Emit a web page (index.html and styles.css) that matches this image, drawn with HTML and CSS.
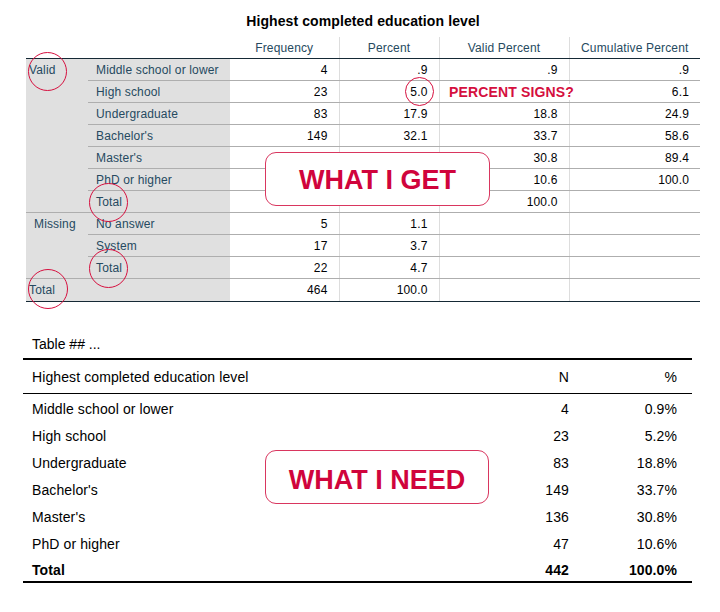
FILE: index.html
```html
<!DOCTYPE html>
<html lang="en">
<head>
<meta charset="utf-8">
<title>Frequencies: what I get vs what I need</title>
<link rel="stylesheet" href="styles.css">
</head>
<body>
<div class="page">
  <section class="spss">
    <div class="spss-title">Highest completed education level</div>
    <table class="freq">
      <colgroup>
        <col class="c-grp"><col class="c-lab"><col class="c-freq"><col class="c-pct"><col class="c-valid"><col class="c-cum">
      </colgroup>
      <thead>
        <tr><th class="blank" colspan="2"></th><th class="sep">Frequency</th><th class="sep">Percent</th><th class="sep">Valid Percent</th><th>Cumulative Percent</th></tr>
      </thead>
      <tbody>
        <tr><th class="grp" rowspan="7">Valid</th><th class="lab">Middle school or lower</th><td class="sep">4</td><td class="sep">.9</td><td class="sep">.9</td><td>.9</td></tr>
        <tr><th class="lab">High school</th><td class="sep">23</td><td class="sep">5.0</td><td class="sep">5.2</td><td>6.1</td></tr>
        <tr><th class="lab">Undergraduate</th><td class="sep">83</td><td class="sep">17.9</td><td class="sep">18.8</td><td>24.9</td></tr>
        <tr><th class="lab">Bachelor's</th><td class="sep">149</td><td class="sep">32.1</td><td class="sep">33.7</td><td>58.6</td></tr>
        <tr><th class="lab">Master's</th><td class="sep">136</td><td class="sep">29.3</td><td class="sep">30.8</td><td>89.4</td></tr>
        <tr><th class="lab">PhD or higher</th><td class="sep">47</td><td class="sep">10.1</td><td class="sep">10.6</td><td>100.0</td></tr>
        <tr><th class="lab">Total</th><td class="sep">442</td><td class="sep">95.3</td><td class="sep">100.0</td><td></td></tr>
        <tr><th class="grp grp-miss" rowspan="3">Missing</th><th class="lab">No answer</th><td class="sep">5</td><td class="sep">1.1</td><td class="sep"></td><td></td></tr>
        <tr><th class="lab">System</th><td class="sep">17</td><td class="sep">3.7</td><td class="sep"></td><td></td></tr>
        <tr><th class="lab">Total</th><td class="sep">22</td><td class="sep">4.7</td><td class="sep"></td><td></td></tr>
        <tr class="last"><th class="grp" colspan="2">Total</th><td class="sep">464</td><td class="sep">100.0</td><td class="sep"></td><td></td></tr>
      </tbody>
    </table>
  </section>

  <section class="apa">
    <div class="apa-caption">Table ## ...</div>
    <table class="apa-table">
      <colgroup><col class="a-lab"><col class="a-n"><col class="a-pct"></colgroup>
      <thead>
        <tr><th class="a-label">Highest completed education level</th><th class="num">N</th><th class="pct">%</th></tr>
      </thead>
      <tbody>
        <tr><td class="a-label">Middle school or lower</td><td class="num">4</td><td class="pct">0.9%</td></tr>
        <tr><td class="a-label">High school</td><td class="num">23</td><td class="pct">5.2%</td></tr>
        <tr><td class="a-label">Undergraduate</td><td class="num">83</td><td class="pct">18.8%</td></tr>
        <tr><td class="a-label">Bachelor's</td><td class="num">149</td><td class="pct">33.7%</td></tr>
        <tr><td class="a-label">Master's</td><td class="num">136</td><td class="pct">30.8%</td></tr>
        <tr><td class="a-label">PhD or higher</td><td class="num">47</td><td class="pct">10.6%</td></tr>
        <tr class="total"><td class="a-label">Total</td><td class="num">442</td><td class="pct">100.0%</td></tr>
      </tbody>
    </table>
  </section>

  <span class="ring ring-valid"></span>
  <span class="ring ring-vtotal"></span>
  <span class="ring ring-mtotal"></span>
  <span class="ring ring-total"></span>
  <span class="ring ring-five"></span>
  <span class="note">PERCENT SIGNS?</span>
  <div class="callout callout-get">WHAT I GET</div>
  <div class="callout callout-need">WHAT I NEED</div>
</div>
</body>
</html>
```
FILE: styles.css
```css
html, body {
  margin: 0;
  padding: 0;
  background: #ffffff;
}

body {
  font-family: "Liberation Sans", Arial, sans-serif;
  color: #000000;
}

.page {
  position: relative;
  width: 720px;
  height: 612px;
  overflow: hidden;
}

/* ---------- SPSS frequency table ---------- */
.spss {
  padding: 13px 0 0 26px;
}

.spss-title {
  width: 674px;
  text-align: center;
  font-weight: bold;
  font-size: 14px;
  line-height: 16px;
  letter-spacing: 0.1px;
  margin-bottom: 8px;
}

.freq {
  border-collapse: collapse;
  table-layout: fixed;
  width: 674px;
  font-size: 12px;
  letter-spacing: 0.15px;
}

.c-grp { width: 62px; }
.c-lab { width: 142px; }
.c-freq { width: 109px; }
.c-pct { width: 100px; }
.c-valid { width: 130px; }
.c-cum { width: 131px; }

.freq th,
.freq td {
  padding: 0;
  height: 21px;
  line-height: 14px;
  white-space: nowrap;
  font-weight: normal;
}

.freq thead th {
  color: #264a60;
  text-align: center;
  vertical-align: middle;
  border-bottom: 1px solid #152935;
}

.freq td {
  text-align: right;
  padding-right: 11px;
  color: #010205;
  border-bottom: 1px solid #aeaeae;
}

.freq .sep {
  border-right: 1px solid #dddddd;
}

.freq .lab {
  text-align: left;
  padding-left: 8px;
  background: #e0e0e0;
  color: #264a60;
  border-bottom: 1px solid #aeaeae;
}

.freq .grp {
  text-align: left;
  vertical-align: top;
  padding-left: 3px;
  padding-top: 4px;
  background: #e0e0e0;
  color: #264a60;
  border-bottom: 1px solid #aeaeae;
}

.freq .grp-miss {
  padding-left: 8px;
}

.freq .last th,
.freq .last td {
  height: 22px;
  border-bottom: 1px solid #152935;
  vertical-align: middle;
  padding-top: 0;
}

/* ---------- APA style table ---------- */
.apa {
  margin-top: 34px;
  padding-left: 23px;
}

.apa-caption {
  padding-left: 9px;
  font-size: 14px;
  line-height: 16px;
  margin-bottom: 6px;
}

.apa-table {
  border-collapse: collapse;
  table-layout: fixed;
  width: 669px;
  font-size: 14px;
  letter-spacing: 0.1px;
}

.a-lab { width: 457px; }
.a-n { width: 100px; }
.a-pct { width: 112px; }

.apa-table th,
.apa-table td {
  padding: 0;
  line-height: 16px;
  white-space: nowrap;
}

.apa-table thead th {
  font-weight: normal;
  height: 33px;
  border-top: 2px solid #000000;
  border-bottom: 1px solid #000000;
}

.apa-table td {
  height: 25px;
  padding-top: 2px;
}

.apa-table .a-label {
  text-align: left;
  padding-left: 9px;
}

.apa-table .num {
  text-align: right;
  padding-right: 11px;
}

.apa-table .pct {
  text-align: right;
  padding-right: 15px;
}

.apa-table .total td {
  font-weight: bold;
  height: 23px;
  padding-top: 2px;
  border-bottom: 2px solid #000000;
}

/* ---------- annotations ---------- */
.ring {
  position: absolute;
  box-sizing: border-box;
  border: 1.3px solid #d6103f;
  border-radius: 50%;
}

.ring-valid { left: 28px; top: 52px; width: 39px; height: 39px; }
.ring-vtotal { left: 89px; top: 183px; width: 39px; height: 39px; }
.ring-mtotal { left: 89px; top: 249px; width: 39px; height: 39px; }
.ring-total { left: 28px; top: 269px; width: 40px; height: 40px; }
.ring-five { left: 405px; top: 77px; width: 29px; height: 29px; }

.note {
  position: absolute;
  left: 440px;
  top: 84px;
  padding: 0 9px;
  background: #ffffff;
  font-size: 14px;
  line-height: 16px;
  font-weight: bold;
  color: #d50f3e;
  letter-spacing: 0.15px;
}

.callout {
  position: absolute;
  box-sizing: border-box;
  display: flex;
  align-items: center;
  justify-content: center;
  padding-top: 2px;
  background: #ffffff;
  border: 1.5px solid #d9365f;
  border-radius: 11px;
  color: #d0043c;
  font-weight: bold;
  font-size: 27px;
  line-height: 30px;
}

.callout-get { left: 265px; top: 152px; width: 225px; height: 54px; }
.callout-need { left: 265px; top: 450px; width: 224px; height: 54px; padding-top: 6px; }
```
